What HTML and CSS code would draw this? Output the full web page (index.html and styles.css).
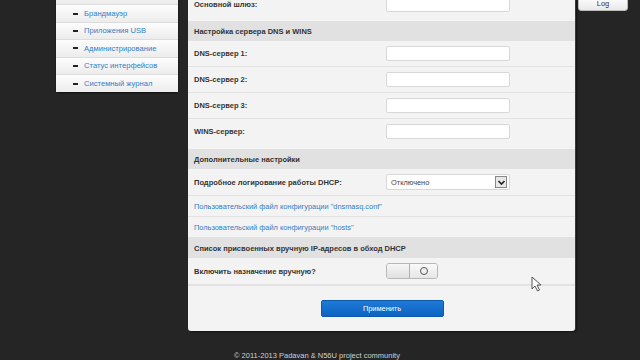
FILE: index.html
```html
<!DOCTYPE html>
<html lang="ru">
<head>
    <meta charset="UTF-8">
    <title>Padavan — LAN DHCP</title>
    <link rel="stylesheet" href="styles.css">
</head>
<body>
    <div class="page">
        <!-- Левое меню -->
        <ul class="sidemenu">
            <li></li>
            <li><span class="dash"></span><a href="#">Брандмауэр</a></li>
            <li><span class="dash"></span><a href="#">Приложения USB</a></li>
            <li><span class="dash"></span><a href="#">Администрирование</a></li>
            <li><span class="dash"></span><a href="#">Статус интерфейсов</a></li>
            <li><span class="dash"></span><a href="#">Системный журнал</a></li>
        </ul>

        <!-- Основная панель -->
        <div class="main">
            <div class="row first">
                <label>Основной шлюз:</label>
                <input class="field" type="text">
            </div>

            <div class="head">Настройка сервера DNS и WINS</div>
            <div class="row">
                <label>DNS-сервер 1:</label>
                <input class="field" type="text">
            </div>
            <div class="row">
                <label>DNS-сервер 2:</label>
                <input class="field" type="text">
            </div>
            <div class="row">
                <label>DNS-сервер 3:</label>
                <input class="field" type="text">
            </div>
            <div class="row last">
                <label>WINS-сервер:</label>
                <input class="field" type="text">
            </div>

            <div class="head">Дополнительные настройки</div>
            <div class="row">
                <label>Подробное логирование работы DHCP:</label>
                <div class="select">
                    <span>Отключено</span>
                    <span class="arrow">
                        <svg width="9" height="9" viewBox="0 0 9 9"><path d="M1.5 3 L4.5 6 L7.5 3" fill="none" stroke="#222" stroke-width="1.6"/></svg>
                    </span>
                </div>
            </div>
            <div class="linkrow"><a href="#">Пользовательский файл конфигурации "dnsmasq.conf"</a></div>
            <div class="linkrow"><a href="#">Пользовательский файл конфигурации "hosts"</a></div>

            <div class="head">Список присвоенных вручную IP-адресов в обход DHCP</div>
            <div class="row">
                <label>Включить назначение вручную?</label>
                <div class="toggle">
                    <span class="off"></span>
                    <span class="on"><i></i></span>
                </div>
            </div>

            <div class="actions">
                <button class="apply">Применить</button>
            </div>
        </div>

        <!-- Правая колонка -->
        <div class="side-right">
            <button class="logbtn">Log</button>
        </div>
    </div>

    <div class="footer">© 2011-2013 Padavan &amp; N56U project community</div>

    <svg class="cursor" width="12" height="16" viewBox="0 0 12 16">
        <path d="M1 1 L1 13 L4 10 L6.5 15 L8.5 14 L6 9 L10 9 Z" fill="#fff" stroke="#555" stroke-width="1"/>
    </svg>
</body>
</html>
```

FILE: styles.css
```css
/* ---------- Общее ---------- */
body {
    margin: 0;
    background: #252525;
    font-family: 'Liberation Sans', Arial, sans-serif;
    color: #333;
    height: 360px;
    overflow: hidden;
    position: relative;
}

.page {
    display: flex;
    align-items: flex-start;
    padding-left: 56px;
}

/* ---------- Левое меню ---------- */
.sidemenu {
    list-style: none;
    margin: -12px 0 0 0;
    padding: 0;
    width: 122px;
    background: #f4f4f4;
    border-radius: 0 0 3px 3px;
    box-shadow: 0 1px 2px rgba(0, 0, 0, 0.6);
}

.sidemenu li {
    box-sizing: border-box;
    height: 17.4px;
    display: flex;
    align-items: center;
    padding-left: 17px;
    border-bottom: 1px solid #dcdcdc;
    background: linear-gradient(#fdfdfd, #ececec);
}

.sidemenu li:last-child {
    border-bottom: none;
}

.sidemenu .dash {
    width: 5px;
    height: 2px;
    background: #222;
    margin-right: 6px;
}

.sidemenu a {
    color: #2f7fc6;
    text-decoration: none;
    font-size: 7.6px;
}

/* ---------- Основная панель ---------- */
.main {
    margin: -8px 0 0 10px;
    width: 387px;
    background: #f3f3f3;
    border-radius: 0 0 3px 3px;
    box-shadow: 1px 0 0 #3a3a3a, 2px 1px 2px rgba(0, 0, 0, 0.5);
}

.row {
    display: grid;
    grid-template-columns: 198px 124px;
    align-items: center;
    padding: 5px 0;
    border-bottom: 1px solid #e2e2e2;
}

.row.first {
    padding-bottom: 9px;
    border-bottom: none;
}

.row.last {
    padding-bottom: 10px;
    border-bottom: none;
}

.row label {
    padding-left: 6px;
    font-weight: bold;
    font-size: 7.5px;
    color: #333;
}

.field {
    box-sizing: border-box;
    width: 124px;
    height: 15px;
    margin: 0;
    background: #fff;
    border: 1px solid #d8d8d8;
    border-radius: 2px;
    padding: 0;
}

.head {
    box-sizing: border-box;
    height: 20px;
    display: flex;
    align-items: center;
    padding-left: 6px;
    background: #e1e1e1;
    font-weight: bold;
    font-size: 7.5px;
    color: #333;
}

.select {
    box-sizing: border-box;
    width: 124px;
    height: 16px;
    display: flex;
    align-items: center;
    justify-content: space-between;
    padding: 0 2px 0 4px;
    background: #fff;
    border: 1px solid #d8d8d8;
    border-radius: 2px;
    font-size: 7.4px;
    color: #444;
}

.select .arrow {
    width: 10px;
    height: 10px;
    display: flex;
    align-items: center;
    justify-content: center;
    border: 1px solid #888;
    background: #e8e8e8;
}

.linkrow {
    box-sizing: border-box;
    height: 21px;
    display: flex;
    align-items: center;
    padding-left: 6px;
    border-bottom: 1px solid #e2e2e2;
}

.linkrow a {
    color: #2f7fc6;
    text-decoration: none;
    font-size: 7.4px;
}

.toggle {
    box-sizing: border-box;
    width: 52px;
    height: 16px;
    display: flex;
    border: 1px solid #b8b8b8;
    border-radius: 3px;
    overflow: hidden;
}

.toggle .off {
    flex: 0 0 22px;
    background: linear-gradient(#f6f6f6, #e0e0e0);
    border-right: 1px solid #b0b0b0;
}

.toggle .on {
    flex: 1;
    display: flex;
    align-items: center;
    justify-content: center;
    background: linear-gradient(#fafafa, #e6e6e6);
}

.toggle .on i {
    width: 6px;
    height: 6px;
    border: 1px solid #555;
    border-radius: 50%;
}

.actions {
    display: flex;
    justify-content: center;
    padding: 14px 0 14px;
    border-top: 1px solid #e2e2e2;
}

.apply {
    width: 123px;
    height: 17px;
    margin-left: 1px;
    background: linear-gradient(#1f7ad6, #0c63c2);
    border: 1px solid #0b58ad;
    border-radius: 2px;
    color: #fff;
    font-family: 'Liberation Sans', Arial, sans-serif;
    font-size: 7.4px;
    padding: 0;
}

/* ---------- Правая колонка ---------- */
.side-right {
    margin-left: 3px;
}

.logbtn {
    display: block;
    margin-top: -4px;
    width: 50px;
    height: 15px;
    background: linear-gradient(#ffffff, #e9e9e9);
    border: 1px solid #bbb;
    border-radius: 0 0 3px 3px;
    font-family: 'Liberation Sans', Arial, sans-serif;
    font-size: 7.4px;
    color: #333;
    padding: 0;
}

/* ---------- Подвал ---------- */
.footer {
    margin-top: 20px;
    padding-left: 234px;
    font-size: 7.5px;
    color: #cfcfcf;
}

/* Курсор мыши поверх страницы */
.cursor {
    position: absolute;
    left: 531px;
    top: 276px;
}
```
